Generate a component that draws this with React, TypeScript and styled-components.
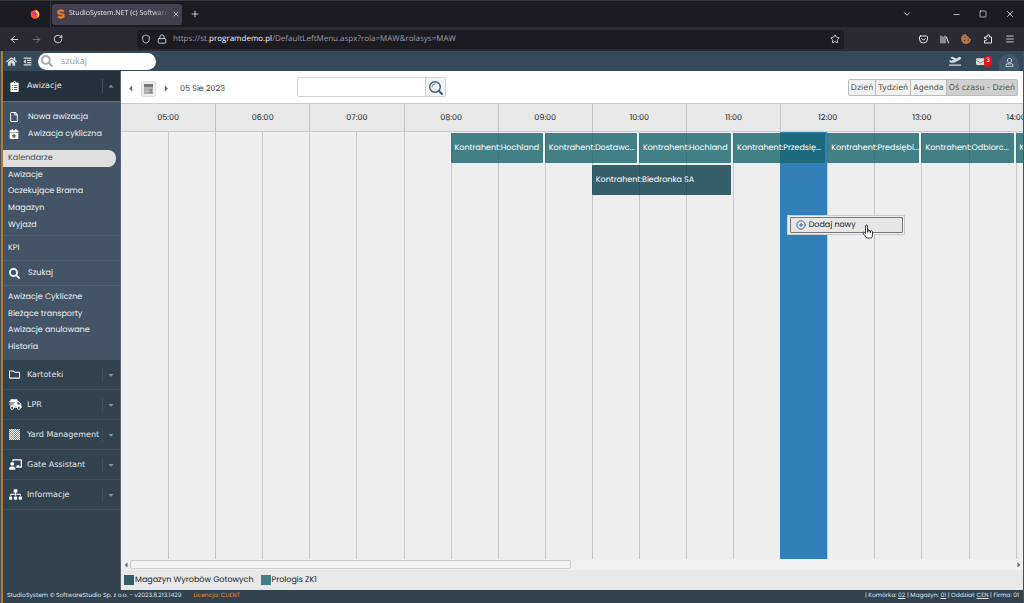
import React from "react";
import styled, { createGlobalStyle, css } from "styled-components";
import {
  FaHome, FaOutdent, FaSearch, FaClipboardList, FaRegFile, FaCalendarPlus, FaRegFolder,
  FaChalkboardTeacher, FaSitemap, FaPlaneDeparture, FaEnvelope, FaRegUser, FaShippingFast,
  FaCaretDown, FaCaretUp, FaCaretLeft, FaCaretRight, FaCookieBite,
} from "react-icons/fa";
import {
  ArrowLeft, ArrowRight, RotateCw, Shield, Lock, Star, X, Plus, ChevronDown, Minus, Square, Menu, CirclePlus,
} from "lucide-react";

const brand = '"Poppins", "Inter", "Liberation Sans", sans-serif';
const system = '"Verdana", "DejaVu Sans", sans-serif';
const chrome = '"Segoe UI", "Open Sans", "Noto Sans", sans-serif';

const Global = createGlobalStyle`
  *, *::before, *::after { box-sizing: border-box; }
  body { margin: 0; font-family: ${brand}; font-size: 8px; line-height: 16px; text-rendering: geometricPrecision; }
  button, input { font: inherit; color: inherit; margin: 0; padding: 0; border: 0; background: none; text-rendering: inherit; }
  button { display: flex; align-items: center; justify-content: center; cursor: pointer; }
  a { color: inherit; text-decoration: none; }
  ul { list-style: none; margin: 0; padding: 0; }
  svg { display: block; flex: none; }
`;

const Page = styled.div`
  min-height: 100vh;
  display: flex;
  flex-direction: column;
  overflow: hidden;
  background: #4a4f55;
`;

/* Browser window */
const TabStrip = styled.header`
  display: flex;
  align-items: center;
  height: 27px;
  padding: 0 4px 0 30px;
  background: #1c1b22;
  border-top: 1px solid #36363d;
  color: #e6e6ea;
  font-family: ${chrome};
`;
const PinnedTab = styled.button`
  width: 21px;
  height: 26px;
  justify-content: flex-start;
  border-right: 1px solid #3a3942;
`;
const Tab = styled.div`
  display: flex;
  align-items: center;
  width: 130px;
  height: 21px;
  margin-left: 1px;
  padding: 0 5px;
  gap: 4px;
  border-radius: 3px;
  background: #42414d;
`;
const TabTitle = styled.span`
  flex: 1;
  font-size: 7px;
  white-space: nowrap;
  mask-image: linear-gradient(90deg, #000 85%, transparent);
`;
const NewTab = styled.button`
  margin-left: 8px;
`;
const WindowControls = styled.div`
  display: flex;
  gap: 18px;
  margin-left: auto;
  padding-right: 5px;
`;
const TabListButton = styled.button`
  margin-right: 22px;
`;
const NavBar = styled.nav`
  display: flex;
  align-items: center;
  height: 24px;
  padding: 0 9px;
  gap: 11px;
  background: #2b2a33;
  color: #e6e6ea;
  font-family: ${chrome};
`;
const AddressBar = styled.label`
  display: flex;
  align-items: center;
  flex: 1;
  height: 19px;
  margin: 0 64px 0 63px;
  padding: 0 4px;
  gap: 6px;
  border-radius: 3px;
  background: #1c1b22;
`;
const Address = styled.span`
  flex: 1;
  color: #9a9aa2;
  b { font-weight: 400; color: #f4f4f6; }
`;
const Extensions = styled.div`
  display: flex;
  align-items: center;
  gap: 12px;
`;
const Dim = styled.span`
  opacity: 0.4;
`;

/* Application shell */
const Shell = styled.div`
  flex: 1;
  display: flex;
  flex-direction: column;
  margin: 0 1px;
  border-left: 2px solid #b87a25;
  background: #32424f;
`;
const TopBar = styled.header`
  display: flex;
  align-items: center;
  height: 20px;
  padding: 0 0 0 3px;
  gap: 6px;
  background: #34495a;
  color: #d5dade;
`;
const QuickSearch = styled.label`
  display: flex;
  align-items: center;
  width: 118px;
  height: 17px;
  padding: 0 3px;
  gap: 8px;
  border-radius: 9px;
  background: #fff;
  color: #aaa;
  input { width: 80px; font-size: 9px; outline: 0; font-family: ${chrome}; }
  input::placeholder { color: #999; opacity: 1; }
`;
const TopActions = styled.div`
  display: flex;
  align-items: center;
  height: 20px;
  gap: 15px;
  margin-left: auto;
  padding-right: 4px;
`;
const MailButton = styled.button`
  position: relative;
  padding-right: 7px;
`;
const Badge = styled.span`
  position: absolute;
  right: 0;
  top: -1px;
  width: 8px;
  height: 11px;
  border-radius: 4px;
  background: #e80f16;
  color: #fff;
  font-size: 6px;
  line-height: 11px;
`;
const UserButton = styled.button`
  width: 20px;
  height: 17px;
  margin-left: -8px;
  align-self: flex-end;
  border-radius: 10px 10px 0 0;
  background: #40586a;
`;
const Columns = styled.div`
  flex: 1;
  display: flex;
  min-width: 0;
`;

/* Sidebar */
const Sidebar = styled.nav`
  flex: none;
  width: 118px;
  border-right: 1px solid #536170;
  color: #eef1f3;
`;
const ModuleButton = styled.button<{ $open?: boolean }>`
  width: 100%;
  height: ${(p) => (p.$open ? 31 : 30)}px;
  justify-content: flex-start;
  padding-left: 6px;
  border-bottom: 1px solid ${(p) => (p.$open ? "#8d6a35" : "#40505d")};
  background: ${(p) => (p.$open ? "#25313a" : "#32424f")};
  font-family: ${system};
  color: #e2e6e9;
`;
const IconSlot = styled.span<{ $wide?: boolean }>`
  width: ${(p) => (p.$wide ? 19 : 18)}px;
  flex: none;
  color: #fff;
`;
const Caret = styled.span`
  display: flex;
  align-items: center;
  justify-content: center;
  width: 16px;
  height: 14px;
  margin: 0 2px 0 auto;
  border-left: 1px solid #40505d;
  color: #8494a0;
`;
const SubMenu = styled.div`
  padding: 7px 0 5px;
  background: #425465;
`;
const Group = styled.ul<{ $height: number; $line?: boolean; $after?: number }>`
  display: grid;
  grid-auto-rows: 1fr;
  height: ${(p) => p.$height}px;
  margin-bottom: ${(p) => p.$after ?? 0}px;
  ${(p) => p.$line && css`border-top: 1px solid #4f6070;`}
`;
const MenuLink = styled.a<{ $active?: boolean; $icon?: boolean }>`
  display: flex;
  align-items: center;
  height: 100%;
  margin-right: 4px;
  padding-left: ${(p) => (p.$icon ? 6 : 5)}px;
  ${(p) => p.$active && css`
    background: #dedede;
    color: #45525c;
    border-radius: 0 8px 8px 0;
  `}
`;

/* Schedule */
const Main = styled.main`
  flex: 1;
  min-width: 0;
  display: flex;
  flex-direction: column;
  overflow: hidden;
  background: #e9e8e8;
  color: #333;
`;
const Toolbar = styled.div`
  display: flex;
  align-items: center;
  height: 32px;
  padding: 0 5px 0 5px;
  background: #fff;
`;
const DateNav = styled.div`
  display: flex;
  align-items: center;
  width: 171px;
  gap: 6px;
  padding-top: 3px;
  color: #666;
`;
const CalendarButton = styled.button`
  width: 15px;
  height: 16px;
  border: 1px solid #ddd;
  border-radius: 2px;
  background: #eee;
`;
const DateText = styled.time`
  margin-left: 3px;
  color: #444;
`;
const Find = styled.form`
  display: flex;
  height: 20px;
  border: 1px solid #d0d0d0;
  border-radius: 2px;
  input { width: 127px; padding: 0 4px; outline: 0; }
  button { width: 20px; background: #f4f4f4; border-left: 1px solid #d0d0d0; color: #2f5f80; }
`;
const Views = styled.div`
  display: flex;
  margin-left: auto;
  padding-top: 1px;
  font-family: ${system};
`;
const ViewButton = styled.button<{ $active?: boolean }>`
  height: 17px;
  padding: 0 2px;
  border: 1px solid #bbb;
  margin-left: -1px;
  color: #555;
  background: ${(p) => (p.$active ? "#cfcfcf" : "#f1f1f1")};
  &:first-child { border-radius: 2px 0 0 2px; }
  &:last-child { border-radius: 0 2px 2px 0; }
`;
const Timeline = styled.section`
  position: relative;
  flex: 1;
  display: flex;
  flex-direction: column;
`;
const Hours = styled.div`
  display: grid;
  grid-template-columns: repeat(10, 1fr);
  width: 104.4%;
  height: 29px;
  border-top: 1px solid #ccc;
  border-bottom: 1px solid #ccc;
  background: #e8e8e8;
`;
const Hour = styled.div`
  display: flex;
  align-items: center;
  justify-content: center;
  color: #222;
  & + & { border-left: 1px solid #c2c2c2; }
`;
const Slots = styled.div`
  flex: 1;
  display: grid;
  grid-template-columns: repeat(20, 1fr);
  grid-template-rows: 31px 32px 1fr;
  width: 104.4%;
  background: #eee;
`;
const Slot = styled.div<{ $index: number; $selected: boolean }>`
  grid-column: ${(p) => p.$index + 1};
  grid-row: 1 / 4;
  border-left: 1px solid ${(p) => (p.$index ? "#c8c8c8" : "transparent")};
  ${(p) => p.$selected && css`background: #3180b8; border-color: #3180b8;`}
`;
const Event = styled.button<{ $start: number; $span: number; $row: number; $dark?: boolean }>`
  grid-column: ${(p) => p.$start} / span ${(p) => p.$span};
  grid-row: ${(p) => p.$row};
  align-self: end;
  justify-content: flex-start;
  min-width: 0;
  height: 30px;
  margin-right: 2px;
  padding-left: 4px;
  border-radius: 1px;
  background: ${(p) => (p.$dark ? "rgba(7, 57, 72, .8)" : "rgba(24, 100, 108, .8)")};
  color: #fff;
  white-space: nowrap;
`;
const ContextMenu = styled.div`
  position: absolute;
  left: 73.8%;
  top: 112px;
  width: 118px;
  height: 20px;
  padding: 1px 2px;
  border: 1px solid #ccc;
  background: #efefef;
  button {
    width: 113px;
    height: 16px;
    justify-content: flex-start;
    gap: 3px;
    padding-left: 5px;
    border: 1px solid #777;
    border-radius: 1px;
    background: #e6e6e6;
    color: #222;
  }
  button svg { color: #1f568a; }
`;
const Pointer = styled.svg`
  position: absolute;
  left: 74px;
  top: 8px;
`;
const ScrollTrack = styled.div`
  display: flex;
  align-items: center;
  justify-content: space-between;
  height: 11px;
  padding-left: 1px;
  background: #f0f0f0;
  color: #666;
`;
const ScrollThumb = styled.div`
  width: 49%;
  height: 9px;
  margin-right: auto;
  border: 1px solid #ccc;
  border-radius: 2px;
  background: #f3f3f3;
`;
const Legend = styled.ul`
  display: flex;
  align-items: center;
  height: 20px;
  padding-left: 3px;
  gap: 7px;
  color: #222;
  li { display: flex; align-items: center; gap: 1px; }
`;
const Swatch = styled.span<{ $color: string }>`
  width: 10px;
  height: 10px;
  background: ${(p) => p.$color};
`;
const Footer = styled.footer`
  display: flex;
  align-items: center;
  height: 13px;
  padding: 0 4px;
  font-size: 6px;
  line-height: 13px;
  color: #dfe4e8;
  a { text-decoration: underline; }
`;
const License = styled.span`
  margin-left: 12px;
  color: #e08a3a;
`;
const Context = styled.span`
  margin-left: auto;
`;

const FirefoxIcon = () => (
  <svg width="10" height="10" viewBox="0 0 20 20">
    <circle cx="10" cy="11" r="8.5" fill="#ff5a36" />
    <path d="M11 1c4 2 8 5 7.500 11-.4 3-2.500 5-4 6 2-6 1-9-3-11z" fill="#ffd43c" />
    <path d="M2 6l2-3 1 3 3-1c3 0 5 2 5 5s-2 4-4 4c-3 0-4-2-4-4-2 0-3-2-3-4z" fill="#ff3366" />
    <circle cx="10.500" cy="10.500" r="2.500" fill="#b044a8" />
  </svg>
);
const StudioIcon = () => (
  <svg width="8" height="10" viewBox="0 0 16 20" fill="none" stroke="#ee7b22" strokeWidth="4.500">
    <path d="M14 5L8 2.500 3 5v3.500l10 3V15l-5 2.500L2 15" />
  </svg>
);
const PocketIcon = () => (
  <svg width="9" height="9" viewBox="0 0 18 18" fill="none" stroke="currentColor" strokeWidth="2" strokeLinecap="round" strokeLinejoin="round">
    <path d="M3 2h12q2 0 2 2v4a8 8 0 0 1-16 0V4q0-2 2-2zM5.500 7L9 10.500 12.500 7" />
  </svg>
);
const LibraryIcon = () => (
  <svg width="9" height="9" viewBox="0 0 18 18" fill="none" stroke="currentColor" strokeWidth="2" strokeLinecap="round">
    <path d="M2 2v14M6 4v12M10 2v14M13 4l4 12" />
  </svg>
);
const ExtensionIcon = () => (
  <svg width="10" height="10" viewBox="0 0 20 20" fill="none" stroke="currentColor" strokeWidth="2" strokeLinejoin="round">
    <path d="M3 18v-5h2q2.500 0 2.500-2T5 9H3V6h5V4q0-2.500 2.500-2.500T13 4v2h4v12z" />
  </svg>
);
const CheckerIcon = () => (
  <svg width="11" height="11" viewBox="0 0 11 11">
    <defs>
      <pattern id="checker" width="2" height="2" patternUnits="userSpaceOnUse">
        <path d="M0 0h1v1H0zM1 1h1v1H1z" fill="#fff" />
      </pattern>
    </defs>
    <rect width="11" height="11" fill="#7d8992" />
    <rect width="11" height="11" fill="url(#checker)" />
  </svg>
);
const CalendarIcon = () => (
  <svg width="9" height="10" viewBox="0 0 9 10">
    <path d="M0 0h9v10H0z" fill="#aaa" />
    <path d="M0 0h9v3H0z" fill="#777" />
    <path d="M5 5h3v4H5z" fill="#777" />
    <path d="M0 5h9M0 7.500h9M3 3v7M6 3v7" stroke="#c5c5c5" strokeWidth=".6" />
  </svg>
);
const LensIcon = () => (
  <svg width="15" height="15" viewBox="0 0 15 15" fill="none" stroke="currentColor" strokeWidth="1.400" strokeLinecap="round">
    <circle cx="7" cy="7" r="5.300" />
    <path d="M11 11l3 3" strokeWidth="2" />
    <path d="M4 7a3 3 0 0 1 3-3" strokeWidth=".7" />
  </svg>
);

const hours = ["05:00", "06:00", "07:00", "08:00", "09:00", "10:00", "11:00", "12:00", "13:00", "14:00"];
const events = [
  { title: "Kontrahent:Hochland", start: 8, span: 2, row: 1 },
  { title: "Kontrahent:Dostawc...", start: 10, span: 2, row: 1 },
  { title: "Kontrahent:Hochland", start: 12, span: 2, row: 1 },
  { title: "Kontrahent:Przedsię...", start: 14, span: 2, row: 1 },
  { title: "Kontrahent:Predsiębi...", start: 16, span: 2, row: 1 },
  { title: "Kontrahent:Odbiorc...", start: 18, span: 2, row: 1 },
  { title: "K", start: 20, span: 1, row: 1 },
  { title: "Kontrahent:Biedronka SA", start: 11, span: 3, row: 2, dark: true },
];
const modules = [
  { label: "Kartoteki", icon: <FaRegFolder size={11} /> },
  { label: "LPR", icon: <FaShippingFast size={13} /> },
  { label: "Yard Management", icon: <CheckerIcon /> },
  { label: "Gate Assistant", icon: <FaChalkboardTeacher size={13} /> },
  { label: "Informacje", icon: <FaSitemap size={13} /> },
];
const calendarLinks = ["Kalendarze", "Awizacje", "Oczekujące Brama", "Magazyn", "Wyjazd"];
const reportLinks = ["Awizacje Cykliczne", "Bieżące transporty", "Awizacje anulowane", "Historia"];

export default function App() {
  return (
    <Page>
      <Global />
      <TabStrip>
        <PinnedTab aria-label="Firefox"><FirefoxIcon /></PinnedTab>
        <Tab>
          <StudioIcon />
          <TabTitle>StudioSystem.NET (c) Software</TabTitle>
          <button aria-label="Zamknij kartę"><X size={8} /></button>
        </Tab>
        <NewTab aria-label="Nowa karta"><Plus size={10} /></NewTab>
        <WindowControls>
          <TabListButton aria-label="Lista kart"><ChevronDown size={10} /></TabListButton>
          <button aria-label="Minimalizuj"><Minus size={9} /></button>
          <button aria-label="Maksymalizuj"><Square size={8} /></button>
          <button aria-label="Zamknij"><X size={10} /></button>
        </WindowControls>
      </TabStrip>
      <NavBar>
        <button aria-label="Wstecz"><ArrowLeft size={11} /></button>
        <Dim><button aria-label="Dalej"><ArrowRight size={11} /></button></Dim>
        <button aria-label="Odśwież"><RotateCw size={10} /></button>
        <AddressBar>
          <Shield size={10} />
          <Lock size={10} />
          <Address>https://st.<b>programdemo.pl</b>/DefaultLeftMenu.aspx?rola=MAW&amp;rolasys=MAW</Address>
          <Star size={10} />
        </AddressBar>
        <Extensions>
          <button aria-label="Pocket"><PocketIcon /></button>
          <button aria-label="Biblioteka"><LibraryIcon /></button>
          <button aria-label="Ciasteczka"><FaCookieBite size={10} color="#b9744a" /></button>
          <button aria-label="Rozszerzenia"><ExtensionIcon /></button>
          <button aria-label="Menu"><Menu size={10} /></button>
        </Extensions>
      </NavBar>
      <Shell>
        <TopBar>
          <button aria-label="Start"><FaHome size={11} /></button>
          <button aria-label="Zwiń menu"><FaOutdent size={9} /></button>
          <QuickSearch>
            <FaSearch size={12} />
            <input placeholder="szukaj" aria-label="szukaj" />
          </QuickSearch>
          <TopActions>
            <button aria-label="Odloty"><FaPlaneDeparture size={12} /></button>
            <MailButton aria-label="Wiadomości"><FaEnvelope size={9} /><Badge>3</Badge></MailButton>
            <UserButton aria-label="Użytkownik"><FaRegUser size={9} /></UserButton>
          </TopActions>
        </TopBar>
        <Columns>
          <Sidebar>
            <ModuleButton $open>
              <IconSlot><FaClipboardList size={11} /></IconSlot>Awizacje
              <Caret><FaCaretUp size={8} /></Caret>
            </ModuleButton>
            <SubMenu>
              <Group $height={33} $after={8}>
                <li><MenuLink href="#nowa" $icon><IconSlot $wide><FaRegFile size={10} /></IconSlot>Nowa awizacja</MenuLink></li>
                <li><MenuLink href="#cykliczna" $icon><IconSlot $wide><FaCalendarPlus size={10} /></IconSlot>Awizacja cykliczna</MenuLink></li>
              </Group>
              <Group $height={83} $after={2}>
                {calendarLinks.map((l, i) => <li key={l}><MenuLink href="#kalendarz" $active={i === 0}>{l}</MenuLink></li>)}
              </Group>
              <Group $height={25} $line><li><MenuLink href="#kpi">KPI</MenuLink></li></Group>
              <Group $height={25} $line><li><MenuLink href="#szukaj" $icon><IconSlot $wide><FaSearch size={11} /></IconSlot>Szukaj</MenuLink></li></Group>
              <Group $height={4} $line />
              <Group $height={66}>
                {reportLinks.map((l) => <li key={l}><MenuLink href="#raport">{l}</MenuLink></li>)}
              </Group>
            </SubMenu>
            {modules.map((m) => (
              <ModuleButton key={m.label}>
                <IconSlot>{m.icon}</IconSlot>{m.label}
                <Caret><FaCaretDown size={8} /></Caret>
              </ModuleButton>
            ))}
          </Sidebar>
          <Main>
            <Toolbar>
              <DateNav>
                <button aria-label="Poprzedni dzień"><FaCaretLeft size={9} /></button>
                <CalendarButton aria-label="Kalendarz"><CalendarIcon /></CalendarButton>
                <button aria-label="Następny dzień"><FaCaretRight size={9} /></button>
                <DateText dateTime="2023-08-05">05 Sie 2023</DateText>
              </DateNav>
              <Find>
                <input aria-label="Szukaj awizacji" />
                <button type="button" aria-label="Szukaj"><LensIcon /></button>
              </Find>
              <Views>
                <ViewButton>Dzień</ViewButton>
                <ViewButton>Tydzień</ViewButton>
                <ViewButton>Agenda</ViewButton>
                <ViewButton $active>Oś czasu - Dzień</ViewButton>
              </Views>
            </Toolbar>
            <Timeline>
              <Hours>{hours.map((h) => <Hour key={h}>{h}</Hour>)}</Hours>
              <Slots>
                {Array.from({ length: 20 }, (_, i) => <Slot key={i} $index={i} $selected={i === 14} />)}
                {events.map((e) => (
                  <Event key={e.start} $start={e.start} $span={e.span} $row={e.row} $dark={e.dark}>{e.title}</Event>
                ))}
              </Slots>
              <ContextMenu>
                <button><CirclePlus size={10} />Dodaj nowy</button>
                <Pointer width="12" height="15" viewBox="0 0 24 30" fill="#fff" stroke="#222" strokeWidth="1.800" strokeLinejoin="round">
                  <path d="M7 17V4q0-2 2-2t2 2v8q1-1 3 0v1q2-1 3 1 3-1 4 1v6q0 4-2 7H9q-2-4-6-8-2-3 0-4 2 0 4 3z" />
                  <path d="M11 12v5M14 13v4M17 14v4" />
                </Pointer>
              </ContextMenu>
            </Timeline>
            <ScrollTrack>
              <FaCaretLeft size={8} />
              <ScrollThumb />
              <FaCaretRight size={8} />
            </ScrollTrack>
            <Legend>
              <li><Swatch $color="#355d69" />Magazyn Wyrobów Gotowych</li>
              <li><Swatch $color="#438086" />Prologis ZK1</li>
            </Legend>
          </Main>
        </Columns>
        <Footer>
          <span>StudioSystem © SoftwareStudio Sp. z o.o. - v2023.8.213.1429</span>
          <License>Licencja: CLIENT</License>
          <Context>| Komórka: <a href="#komorka">02</a> | Magazyn: <a href="#magazyn">01</a> | Oddział: <a href="#oddzial">CEN</a> | Firma: 01</Context>
        </Footer>
      </Shell>
    </Page>
  );
}
